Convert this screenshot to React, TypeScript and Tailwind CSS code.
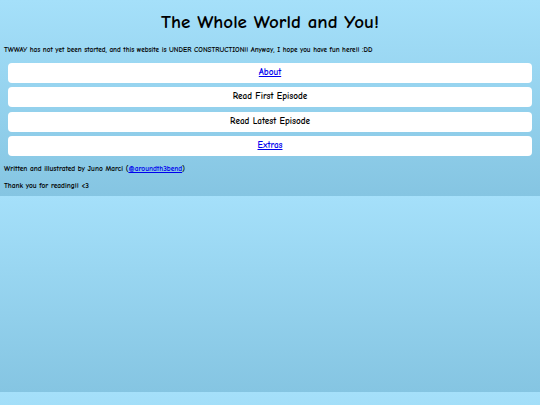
import React from 'react';

const links = [
  { label: 'About', link: true },
  { label: 'Read First Episode', link: false },
  { label: 'Read Latest Episode', link: false },
  { label: 'Extras', link: true },
];

export default function App() {
  return (
    <div className="min-h-[405px] bg-[linear-gradient(#a5e0fa,#85c5e2)] bg-[length:100%_196px] bg-repeat-y font-['Comic_Sans_MS','Comic_Neue','DejaVu_Sans',sans-serif] text-black">
      <div className="h-[196px] px-[4px] pt-[10px]">
        <h1 className="text-center text-[19px] font-bold leading-[24px]">The Whole World and You!</h1>
        <p className="mt-[12px] text-[7.2px] font-bold leading-[9px]">
          TWWAY has not yet been started, and this website is UNDER CONSTRUCTION!! Anyway, I hope you have fun here!! :DD
        </p>
        <div className="mt-[8px] flex flex-col gap-[4.3px] px-[4px]">
          {links.map(item => (
            <div
              key={item.label}
              className="flex h-[20px] items-center justify-center rounded-[4px] bg-white text-[9.2px] font-bold"
            >
              {item.link ? (
                <a href="#" className="text-[#0000ee] underline">{item.label}</a>
              ) : (
                <span>{item.label}</span>
              )}
            </div>
          ))}
        </div>
        <p className="mt-[8px] text-[7.4px] font-bold leading-[9px]">
          Written and illustrated by Juno Marci (<a href="#" className="text-[#0000ee] underline">@aroundth3bend</a>)
        </p>
        <p className="mt-[8px] text-[7.4px] font-bold leading-[9px]">Thank you for reading!! &lt;3</p>
      </div>
    </div>
  );
}
